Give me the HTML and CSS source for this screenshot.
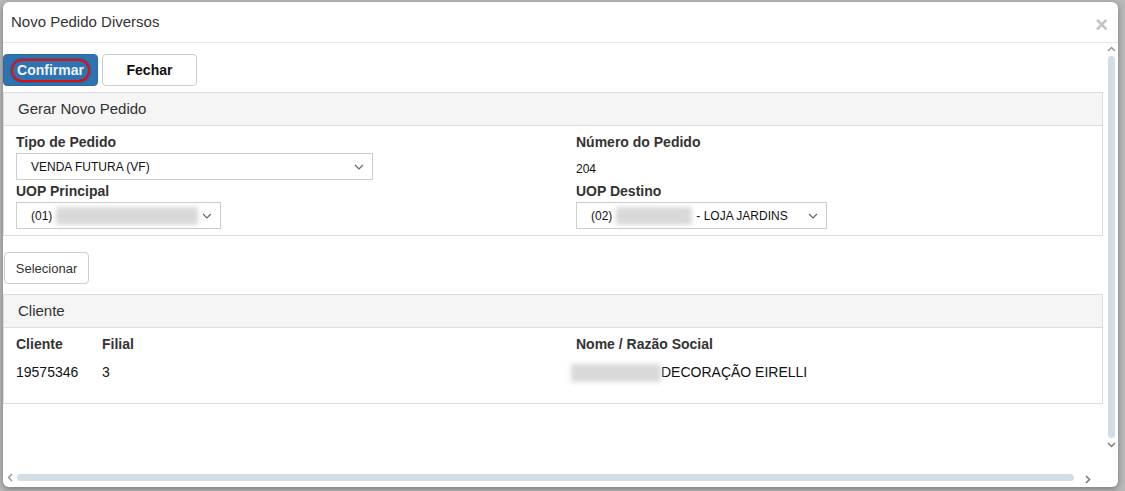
FILE: index.html
```html
<!DOCTYPE html>
<html lang="pt-BR">
<head>
    <meta charset="UTF-8">
    <title>Novo Pedido Diversos</title>
    <link rel="stylesheet" href="styles.css">
</head>
<body>
    <div class="modal">
        <div class="modal-header">
            <span class="modal-title">Novo Pedido Diversos</span>
            <span class="close">&times;</span>
        </div>
        <div class="modal-frame">
            <div class="modal-body">
                <div class="actions">
                    <button class="btn btn-primary"><span class="focus-ring">Confirmar</span></button>
                    <button class="btn btn-default">Fechar</button>
                </div>

                <div class="panel">
                    <div class="panel-heading">Gerar Novo Pedido</div>
                    <div class="panel-body form-grid">
                        <div class="field">
                            <label>Tipo de Pedido</label>
                            <div class="select select-tipo">
                                <span>VENDA FUTURA (VF)</span>
                                <svg class="caret" width="10" height="6" viewBox="0 0 10 6"><path d="M1 1l4 4 4-4" fill="none" stroke="#666" stroke-width="1.2"/></svg>
                            </div>
                        </div>
                        <div class="field">
                            <label>Número do Pedido</label>
                            <div class="static">204</div>
                        </div>
                        <div class="field">
                            <label>UOP Principal</label>
                            <div class="select select-uop">
                                <span>(01)</span><span class="blur blur-a"></span>
                                <svg class="caret" width="10" height="6" viewBox="0 0 10 6"><path d="M1 1l4 4 4-4" fill="none" stroke="#666" stroke-width="1.2"/></svg>
                            </div>
                        </div>
                        <div class="field">
                            <label>UOP Destino</label>
                            <div class="select select-destino">
                                <span>(02)</span><span class="blur blur-b"></span><span>- LOJA JARDINS</span>
                                <svg class="caret" width="10" height="6" viewBox="0 0 10 6"><path d="M1 1l4 4 4-4" fill="none" stroke="#666" stroke-width="1.2"/></svg>
                            </div>
                        </div>
                    </div>
                </div>

                <button class="btn btn-small">Selecionar</button>

                <div class="panel">
                    <div class="panel-heading">Cliente</div>
                    <div class="panel-body client-grid">
                        <label>Cliente</label>
                        <label>Filial</label>
                        <label>Nome / Razão Social</label>
                        <div class="value">19575346</div>
                        <div class="value">3</div>
                        <div class="value"><span class="blur blur-c"></span>DECORAÇÃO EIRELLI</div>
                    </div>
                </div>
            </div>

            <div class="vscroll">
                <svg width="9" height="6" viewBox="0 0 9 6"><path d="M1 5l3.5-3.5L8 5" fill="none" stroke="#999" stroke-width="1.5"/></svg>
                <div class="vthumb"></div>
                <svg width="9" height="6" viewBox="0 0 9 6"><path d="M1 1l3.5 3.5L8 1" fill="none" stroke="#777" stroke-width="1.5"/></svg>
            </div>
            <div class="hscroll">
                <svg width="6" height="9" viewBox="0 0 6 9"><path d="M5 1L1.5 4.5 5 8" fill="none" stroke="#999" stroke-width="1.5"/></svg>
                <div class="hthumb"></div>
            </div>
            <div class="corner">
                <svg width="6" height="9" viewBox="0 0 6 9"><path d="M1 1l3.5 3.5L1 8" fill="none" stroke="#777" stroke-width="1.5"/></svg>
            </div>
        </div>
    </div>
</body>
</html>
```

FILE: styles.css
```css
html, body{
    margin: 0;
    height: 100%;
}
body{
    background-color: #b8b8b8;
    font-family: "Liberation Sans", Arial, sans-serif;
    color: #333;
    overflow: hidden;
}
.modal{
    margin: 2px 7px 0 3px;
    height: 485px;
    background-color: #fff;
    border-radius: 6px;
    box-shadow: 0 2px 6px rgba(0, 0, 0, 0.35);
    display: flex;
    flex-direction: column;
    overflow: hidden;
}
.modal-header{
    height: 40px;
    border-bottom: 1px solid #e5e5e5;
    display: flex;
    align-items: center;
    justify-content: space-between;
    padding: 0 10px 0 8px;
}
.modal-title{
    font-size: 15px;
    color: #333;
    margin-top: -2px;
}
.close{
    font-size: 22px;
    font-weight: bold;
    color: #c4c4c4;
    margin-top: 6px;
}
.modal-frame{
    flex: 1;
    display: grid;
    grid-template-columns: 1fr 15px;
    grid-template-rows: 1fr 19px;
    min-height: 0;
}
.modal-body{
    padding-top: 11px;
    overflow: hidden;
}
.actions{
    display: flex;
    gap: 4px;
}
.btn{
    font-family: "Liberation Sans", Arial, sans-serif;
    border-radius: 4px;
    cursor: pointer;
}
.btn-primary{
    width: 95px;
    height: 32px;
    background-color: #2f74b0;
    border: 1px solid #2a6aa1;
    color: #eef3f8;
    font-weight: bold;
    font-size: 14px;
    padding: 0;
}
.focus-ring{
    display: inline-block;
    padding: 1px 4px 2px;
    border: 2px solid #e01010;
    border-radius: 12px;
    box-shadow: 0 0 2px rgba(40, 0, 0, 0.6);
}
.btn-default{
    width: 95px;
    height: 32px;
    background-color: #fff;
    border: 1px solid #ccc;
    color: #111;
    font-weight: bold;
    font-size: 14px;
}
.btn-small{
    display: block;
    margin: 16px 0 10px 1px;
    width: 85px;
    height: 32px;
    background-color: #fff;
    border: 1px solid #ccc;
    color: #333;
    font-size: 13px;
    padding: 0;
}
.panel{
    width: 1098px;
    border: 1px solid #ddd;
    margin-top: 6px;
}
.btn-small + .panel{
    margin-top: 0;
}
.panel-heading{
    height: 32px;
    line-height: 32px;
    padding-left: 14px;
    background-color: #f5f5f5;
    border-bottom: 1px solid #ddd;
    font-size: 15px;
    color: #333;
}
.panel-body{
    padding: 7px 12px 6px;
}
label{
    display: block;
    font-weight: bold;
    font-size: 14px;
    color: #333;
    line-height: 18px;
}
.form-grid{
    display: grid;
    grid-template-columns: 560px 1fr;
    row-gap: 2px;
}
.field label{
    margin-bottom: 2px;
}
.static{
    font-size: 12px;
    color: #111;
    height: 27px;
    box-sizing: border-box;
    padding-top: 7px;
    line-height: 18px;
}
.select{
    height: 25px;
    border: 1px solid #ccc;
    display: flex;
    align-items: center;
    gap: 4px;
    padding: 0 8px 0 14px;
    font-size: 12px;
    color: #111;
}
.select .caret{
    margin-left: auto;
}
.select-tipo{
    width: 333px;
}
.select-uop{
    width: 181px;
}
.select-destino{
    width: 227px;
}
.blur{
    display: inline-block;
    height: 18px;
    background-color: #d9d9d9;
    filter: blur(2.5px);
}
.blur-a{
    width: 144px;
}
.blur-b{
    width: 76px;
}
.blur-c{
    width: 90px;
    margin-left: -5px;
    vertical-align: middle;
}
.client-grid{
    display: grid;
    grid-template-columns: 86px 474px 1fr;
    row-gap: 10px;
    padding-top: 7px;
    padding-bottom: 21px;
}
.value{
    font-size: 14px;
    color: #111;
    line-height: 18px;
}
.vscroll{
    display: flex;
    flex-direction: column;
    align-items: center;
    padding: 3px 0 0 1px;
    gap: 4px;
}
.vthumb{
    width: 7px;
    height: 382px;
    background-color: #d3dde6;
    border-radius: 4px;
}
.hscroll{
    display: flex;
    align-items: center;
    gap: 4px;
    padding-left: 4px;
}
.hthumb{
    width: 1057px;
    height: 7px;
    background-color: #d3dde6;
    border-radius: 4px;
}
.corner{
    display: flex;
    align-items: flex-end;
    padding-bottom: 3px;
}
.corner svg{
    margin-left: -18px;
}
```
